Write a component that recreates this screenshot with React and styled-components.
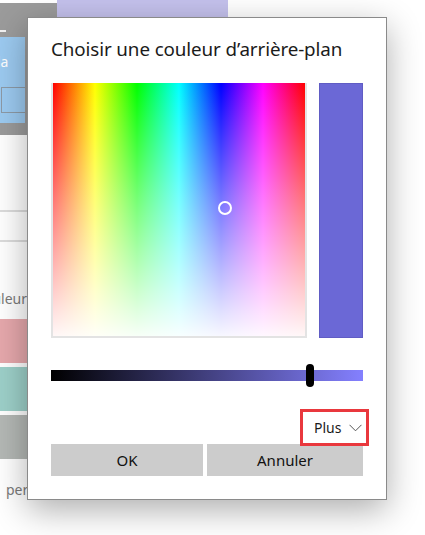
import styled, { createGlobalStyle } from "styled-components";

const GlobalStyle = createGlobalStyle`
    html, body {
        margin: 0;
        padding: 0;
        background: #ffffff;
    }
    body {
        font-family: "Noto Sans", "Open Sans", sans-serif;
    }
`;

const swatches = ["#e6a8ac", "#9dd0c9", "#b4b8b5"];

const App = () => {
    return (
        <>
            <GlobalStyle />
            <Page>
                <Backdrop>
                    <TopRow>
                        <SidePanel>
                            <Dash />
                            <BlueArea>
                                <BlueLabel>la</BlueLabel>
                                <OutlinedBox />
                            </BlueArea>
                        </SidePanel>
                        <PurpleBlock />
                    </TopRow>
                    <Divider $top={75} />
                    <Divider $top={28} />
                    <ClippedText $top={48}>
                        <span>Couleur</span>
                    </ClippedText>
                    <SwatchList>
                        {swatches.map((c) => (
                            <Swatch key={c} $color={c} />
                        ))}
                    </SwatchList>
                    <FooterText>personnalisées</FooterText>
                </Backdrop>

                <Dialog>
                    <Title>Choisir une couleur d’arrière-plan</Title>
                    <PickerRow>
                        <Spectrum>
                            <Marker style={{ left: "172px", top: "125px" }} />
                        </Spectrum>
                        <Preview />
                    </PickerRow>
                    <Slider>
                        <Track />
                        <Thumb style={{ left: "255px" }} />
                    </Slider>
                    <MoreRow>
                        <MoreButton>
                            Plus
                            <svg width="13" height="8" viewBox="0 0 13 8">
                                <path d="M0.5 0.8 L6.5 6.8 L12.5 0.8" fill="none" stroke="#555" strokeWidth="1" />
                            </svg>
                        </MoreButton>
                    </MoreRow>
                    <ButtonRow>
                        <ActionButton>OK</ActionButton>
                        <ActionButton>Annuler</ActionButton>
                    </ButtonRow>
                </Dialog>
            </Page>
        </>
    );
};

const Page = styled.div`
    position: relative;
    width: 425px;
    height: 535px;
    overflow: hidden;
    background: #ffffff;
`;

const Backdrop = styled.div`
    display: flex;
    flex-direction: column;
    width: 100%;
    height: 100%;
`;

const TopRow = styled.div`
    display: flex;
    align-items: flex-start;
`;

const SidePanel = styled.div`
    margin-top: 3px;
    width: 57px;
    height: 132px;
    background: #9b9b9b;
    padding-top: 27px;
    box-sizing: border-box;
`;

const Dash = styled.div`
    width: 6px;
    height: 2px;
    background: #f2f2f2;
`;

const BlueArea = styled.div`
    margin-top: 5px;
    width: 25px;
    height: 86px;
    background: #9ccaf0;
    display: flex;
    flex-direction: column;
    padding-top: 15px;
    box-sizing: border-box;
`;

const BlueLabel = styled.div`
    color: #ffffff;
    font-size: 14px;
    line-height: 20px;
    margin-left: -3px;
`;

const OutlinedBox = styled.div`
    margin-top: 15px;
    margin-left: 1px;
    height: 26px;
    border: 1px solid #8d9aa6;
    border-right: none;
    box-sizing: border-box;
`;

const PurpleBlock = styled.div`
    width: 171px;
    height: 60px;
    background: #c4c1ec;
`;

const Divider = styled.div`
    margin-top: ${(p) => p.$top}px;
    height: 2px;
    width: 60px;
    background: #dcdcdc;
`;

const ClippedText = styled.div`
    margin-top: ${(p) => p.$top}px;
    width: 27px;
    overflow: hidden;
    display: flex;
    justify-content: flex-end;
    font-size: 14px;
    line-height: 18px;
    color: #7a7a7a;
    white-space: nowrap;
`;

const SwatchList = styled.div`
    margin-top: 11px;
    display: flex;
    flex-direction: column;
    gap: 4px;
    width: 60px;
`;

const Swatch = styled.div`
    height: 44px;
    background: ${(p) => p.$color};
`;

const FooterText = styled.div`
    margin-top: 22px;
    margin-left: 6px;
    font-size: 14px;
    line-height: 18px;
    color: #7a7a7a;
    white-space: nowrap;
`;

const Dialog = styled.div`
    position: absolute;
    left: 27px;
    top: 17px;
    width: 360px;
    height: 483px;
    box-sizing: border-box;
    background: #ffffff;
    border: 1px solid #8a8a8a;
    box-shadow: 0 10px 32px rgba(0, 0, 0, 0.32);
    padding: 18px 23px 0;
    display: flex;
    flex-direction: column;
`;

const Title = styled.h1`
    margin: 0;
    font-size: 18.8px;
    line-height: 26px;
    font-weight: 400;
    letter-spacing: -0.1px;
    color: #1b1b1b;
    white-space: nowrap;
`;

const PickerRow = styled.div`
    margin-top: 21px;
    display: flex;
    gap: 12px;
    height: 255px;
`;

const Spectrum = styled.div`
    position: relative;
    width: 256px;
    height: 255px;
    box-sizing: border-box;
    border: 2px solid #e3e3e3;
    border-top: none;
    background:
        linear-gradient(to bottom, rgba(255, 255, 255, 0) 0%, rgba(255, 255, 255, 0.45) 45%, rgba(255, 255, 255, 0.97) 100%),
        linear-gradient(to right, #ff0000 0%, #ffff00 16.67%, #00ff00 33.33%, #00ffff 50%, #0000ff 66.67%, #ff00ff 83.33%, #ff0000 100%);
`;

const Marker = styled.div`
    position: absolute;
    width: 14px;
    height: 14px;
    margin: -7px 0 0 -7px;
    box-sizing: border-box;
    border: 2px solid #ffffff;
    border-radius: 50%;
`;

const Preview = styled.div`
    width: 44px;
    height: 255px;
    box-sizing: border-box;
    background: #6b68d6;
    border: 1px solid #605cc4;
`;

const Slider = styled.div`
    position: relative;
    margin-top: 26px;
    height: 23px;
    display: flex;
    align-items: center;
`;

const Track = styled.div`
    width: 100%;
    height: 11px;
    background: linear-gradient(to right, #000000, #8480ff);
`;

const Thumb = styled.div`
    position: absolute;
    top: 0;
    width: 8px;
    height: 23px;
    border-radius: 4px;
    background: #000000;
`;

const MoreRow = styled.div`
    margin-top: 22px;
    margin-right: -6px;
    margin-bottom: -2px;
    display: flex;
    justify-content: flex-end;
    position: relative;
    z-index: 1;
`;

const MoreButton = styled.button`
    width: 69px;
    height: 37px;
    box-sizing: border-box;
    border: 3px solid #e9383d;
    background: transparent;
    padding: 0 0 0 11px;
    display: flex;
    align-items: center;
    gap: 8px;
    font-family: "Noto Sans", sans-serif;
    font-size: 14px;
    color: #1b1b1b;
`;

const ButtonRow = styled.div`
    display: grid;
    grid-template-columns: 152px 156px;
    gap: 4px;
`;

const ActionButton = styled.button`
    height: 32px;
    border: none;
    background: #cccccc;
    font-family: "Noto Sans", sans-serif;
    font-size: 15px;
    color: #111111;
    padding: 0;
`;

export default App;
